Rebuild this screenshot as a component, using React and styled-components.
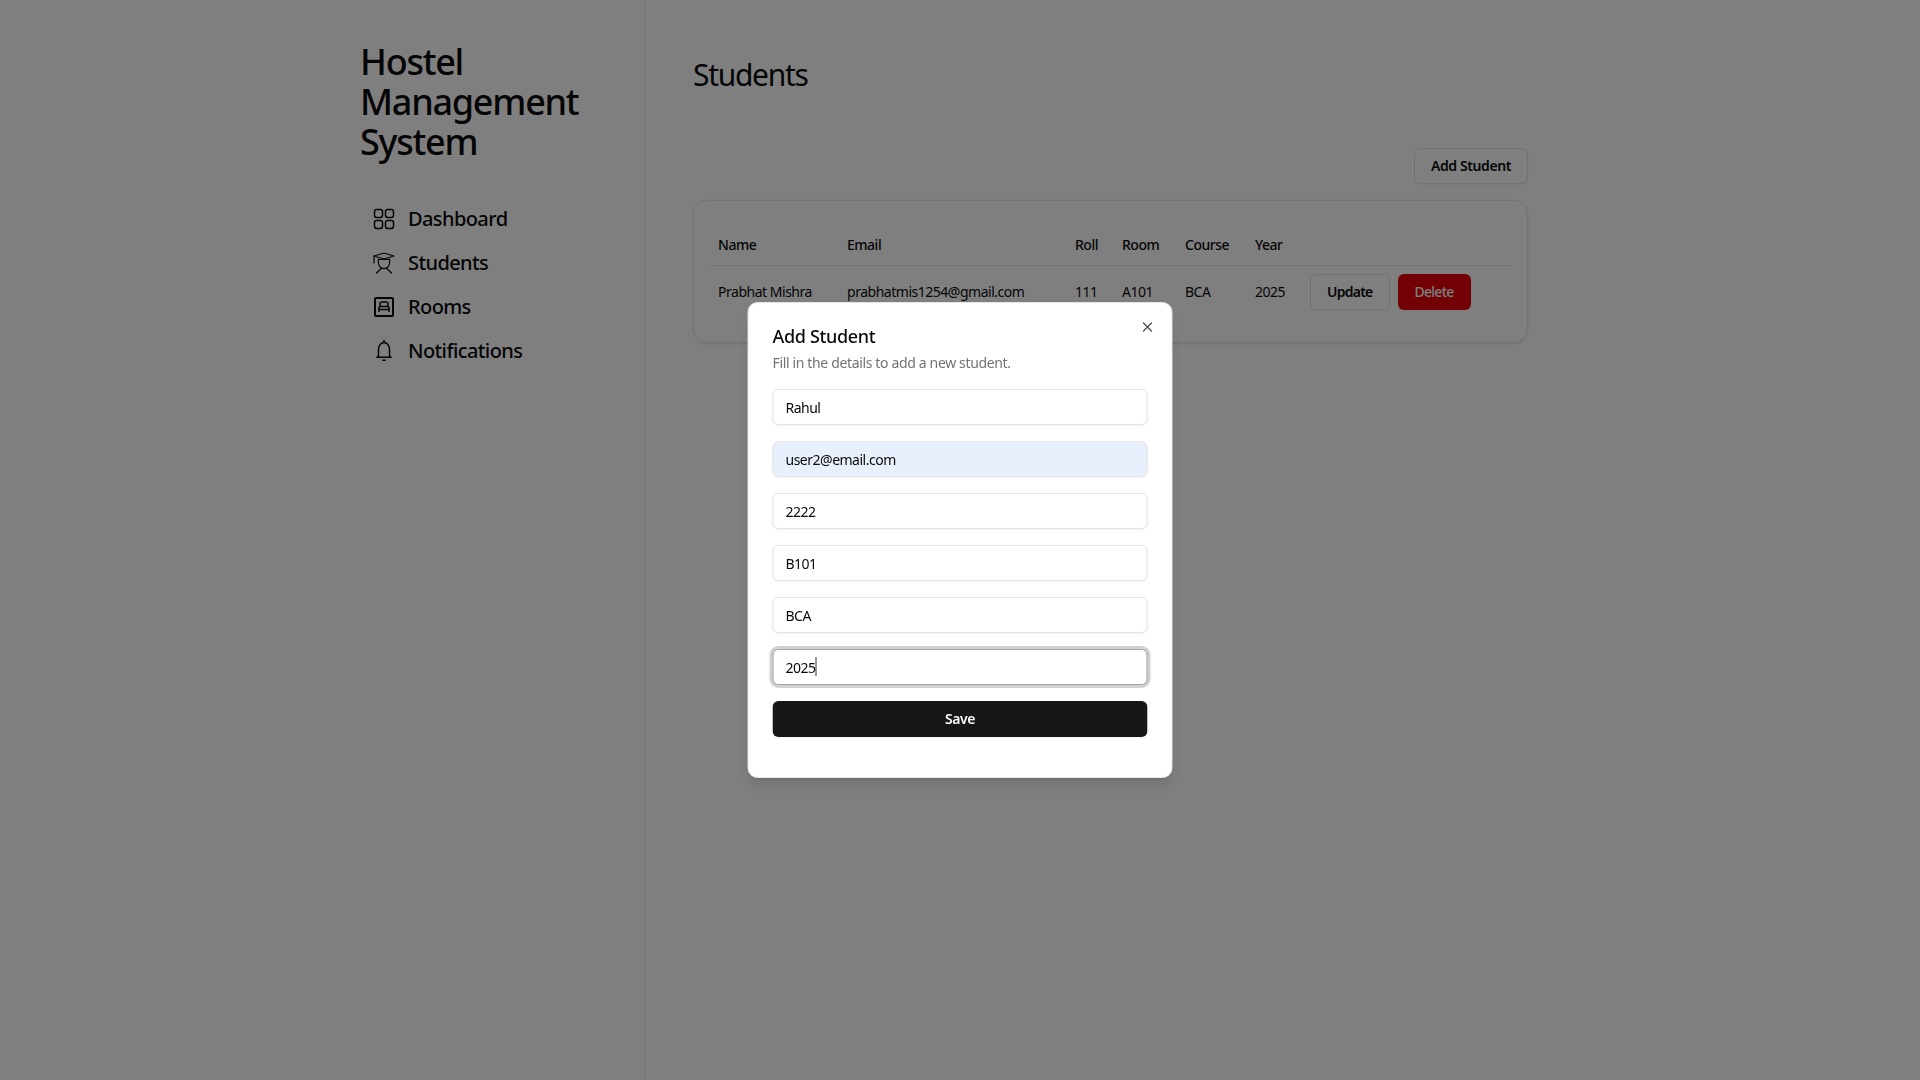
import React from 'react'
import styled, { createGlobalStyle } from 'styled-components'
import { X } from 'lucide-react'

const GlobalStyle = createGlobalStyle`
    * { box-sizing: border-box; }
    html, body { margin: 0; padding: 0; background: #fff; }
    body {
        font-family: "Noto Sans", "Open Sans", sans-serif;
        color: #0a0a0a;
    }
`

const Shell = styled.div`
    display: flex;
    width: 1248px;
    min-height: 100vh;
    margin: 0 auto;
`

const Sidebar = styled.aside`
    width: 309px;
    flex: none;
    padding: 42px 24px;
    border-right: 1px solid #e5e5e5;
`

const Brand = styled.h1`
    margin: 0 0 35px;
    font-size: 36px;
    line-height: 40px;
    font-weight: 500;
    letter-spacing: -1.25px;
`

const Nav = styled.nav`
    display: flex;
    flex-direction: column;
`

const NavItem = styled.a`
    display: flex;
    align-items: center;
    gap: 12px;
    padding: 8px 12px;
    font-size: 20px;
    line-height: 28px;
    font-weight: 500;
    letter-spacing: -0.6px;
`

const NavIcon = styled.svg.attrs({ viewBox: '0 0 24 24', fill: 'none', stroke: 'currentColor' })`
    width: 24px;
    height: 24px;
    flex: none;
    stroke-width: ${p => p.$weight || 1.5};
    stroke-linecap: round;
    stroke-linejoin: round;
`

const Main = styled.main`
    flex: 1;
    padding: 57px 56px 0 48px;
`

const PageTitle = styled.h2`
    margin: 0 0 55px;
    font-size: 30px;
    line-height: 36px;
    font-weight: 400;
    letter-spacing: -1.3px;
`

const Toolbar = styled.div`
    display: flex;
    justify-content: flex-end;
    margin-bottom: 16px;
`

const Button = styled.button`
    height: 36px;
    padding: 0 16px 2px;
    border: 1px solid ${p => (p.$variant === 'outline' ? '#e5e5e5' : 'transparent')};
    border-radius: 6px;
    background: ${p => (p.$variant === 'danger' ? '#e7000b' : p.$variant === 'primary' ? '#171717' : '#fff')};
    color: ${p => (p.$variant === 'outline' ? '#0a0a0a' : '#fafafa')};
    font-family: inherit;
    font-size: 14px;
    font-weight: ${p => (p.$variant === 'danger' ? 500 : 600)};
    letter-spacing: -0.4px;
    box-shadow: 0 1px 2px rgba(0, 0, 0, 0.05);
`

const Card = styled.section`
    height: 143px;
    padding: 24px 16px;
    border: 1px solid #e5e5e5;
    border-radius: 14px;
    box-shadow: 0 1px 3px rgba(0, 0, 0, 0.1);
`

const Table = styled.table`
    width: 100%;
    border-collapse: collapse;
    table-layout: fixed;
    font-size: 14px;
    letter-spacing: -0.48px;
`

const HeadCell = styled.th`
    height: 40px;
    padding: 0 8px;
    text-align: left;
    font-weight: 500;
    border-bottom: 1px solid #e5e5e5;
`

const Cell = styled.td`
    height: 52px;
    padding: 0 8px;
`

const Actions = styled.div`
    display: flex;
    gap: 8px;
    padding-top: 2px;

    ${Button} {
        letter-spacing: -0.75px;
    }
`

const Overlay = styled.div`
    position: fixed;
    inset: 0;
    background: rgba(0, 0, 0, 0.5);
`

const Modal = styled.div`
    position: fixed;
    top: 50%;
    left: 50%;
    transform: translate(-50%, -50%);
    display: flex;
    flex-direction: column;
    gap: 16px;
    width: 425px;
    height: 476px;
    padding: 24px;
    border: 1px solid #e5e5e5;
    border-radius: 10px;
    background: #fff;
    box-shadow: 0 10px 15px -3px rgba(0, 0, 0, 0.1), 0 4px 6px -4px rgba(0, 0, 0, 0.1);
`

const CloseButton = styled.span`
    position: absolute;
    top: 16px;
    right: 16px;
    display: flex;
    color: #0a0a0a;
    opacity: 0.7;
`

const ModalHeader = styled.div`
    display: flex;
    flex-direction: column;
    gap: 8px;
`

const ModalTitle = styled.h3`
    margin: 0;
    font-size: 18px;
    line-height: 18px;
    font-weight: 500;
    letter-spacing: -0.35px;
`

const ModalText = styled.p`
    margin: 0;
    font-size: 14px;
    line-height: 20px;
    color: #737373;
    letter-spacing: -0.35px;
`

const Form = styled.form`
    display: flex;
    flex-direction: column;
    gap: 16px;
`

const FieldWrap = styled.div`
    position: relative;
`

const Input = styled.input`
    display: block;
    width: 100%;
    height: 36px;
    padding: 4px 12px;
    border: 1px solid ${p => (p.$focused ? '#a1a1a1' : '#e5e5e5')};
    border-radius: 6px;
    outline: none;
    background: ${p => (p.$autofilled ? '#e8f0fe' : '#fff')};
    color: #0a0a0a;
    font-family: inherit;
    font-size: 14px;
    letter-spacing: -0.5px;
    box-shadow: ${p => (p.$focused ? '0 0 0 3px rgba(161, 161, 161, 0.5)' : '0 1px 2px rgba(0, 0, 0, 0.05)')};
`

const Caret = styled.span`
    position: absolute;
    top: 8px;
    left: 43px;
    width: 1px;
    height: 19px;
    background: #333;
`

const SaveButton = styled(Button)`
    width: 100%;
`

const DashboardIcon = () => (
    <NavIcon>
        <rect x="2.5" y="2.5" width="8" height="8" rx="2.2" />
        <rect x="13.5" y="2.5" width="8" height="8" rx="2.2" />
        <rect x="2.5" y="13.5" width="8" height="8" rx="2.2" />
        <rect x="13.5" y="13.5" width="8" height="8" rx="2.2" />
    </NavIcon>
)

const StudentIcon = () => (
    <NavIcon $weight={1.2}>
        <path d="M2 5 12 2l10 3-10 3z" />
        <path d="M2 5v7" />
        <path d="M6.4 8v4a5.6 5.6 0 0 0 11.2 0V8" />
        <path d="M6.4 8.5h11.2" />
        <path d="M9.6 17.2 4.5 22M14.4 17.2l5.1 4.8" />
    </NavIcon>
)

const RoomIcon = () => (
    <NavIcon>
        <rect x="3" y="3" width="18" height="18" rx="1" strokeWidth="2" />
        <path d="M8 11.500V8.700A1.700 1.700 0 0 1 9.700 7h4.600A1.700 1.700 0 0 1 16 8.700v2.800" />
        <path d="M7 16.500V13a1.500 1.500 0 0 1 1.500-1.500h7A1.500 1.500 0 0 1 17 13v3.500" />
        <path d="M7 14.500h10" />
    </NavIcon>
)

const BellIcon = () => (
    <NavIcon>
        <path d="M12 1.500v2" />
        <path d="M6.500 16V10a5.500 6.500 0 0 1 11 0v6c0 1 .6 1.600 1.500 2.300H5c.9-.7 1.500-1.300 1.500-2.300z" />
        <path d="M10.700 21.200h2.600" />
    </NavIcon>
)

const navItems = [
    { label: 'Dashboard', Icon: DashboardIcon },
    { label: 'Students', Icon: StudentIcon },
    { label: 'Rooms', Icon: RoomIcon },
    { label: 'Notifications', Icon: BellIcon },
]

const columns = [
    { label: 'Name', width: 129 },
    { label: 'Email', width: 228 },
    { label: 'Roll', width: 47 },
    { label: 'Room', width: 63 },
    { label: 'Course', width: 70 },
    { label: 'Year', width: 55 },
    { label: '' },
]

const fields = ['Rahul', 'user2@email.com', '2222', 'B101', 'BCA', '2025']

export default function App() {
    return (
        <>
            <GlobalStyle />
            <Shell>
                <Sidebar>
                    <Brand>Hostel Management System</Brand>
                    <Nav>
                        {navItems.map(({ label, Icon }) => (
                            <NavItem key={label}>
                                <Icon />
                                {label}
                            </NavItem>
                        ))}
                    </Nav>
                </Sidebar>
                <Main>
                    <PageTitle>Students</PageTitle>
                    <Toolbar>
                        <Button $variant="outline">Add Student</Button>
                    </Toolbar>
                    <Card>
                        <Table>
                            <colgroup>
                                {columns.map((c, i) => <col key={i} width={c.width} />)}
                            </colgroup>
                            <thead>
                                <tr>
                                    {columns.map((c, i) => <HeadCell key={i}>{c.label}</HeadCell>)}
                                </tr>
                            </thead>
                            <tbody>
                                <tr>
                                    <Cell>Prabhat Mishra</Cell>
                                    <Cell>prabhatmis1254@gmail.com</Cell>
                                    <Cell>111</Cell>
                                    <Cell>A101</Cell>
                                    <Cell>BCA</Cell>
                                    <Cell>2025</Cell>
                                    <Cell>
                                        <Actions>
                                            <Button $variant="outline">Update</Button>
                                            <Button $variant="danger">Delete</Button>
                                        </Actions>
                                    </Cell>
                                </tr>
                            </tbody>
                        </Table>
                    </Card>
                </Main>
            </Shell>
            <Overlay />
            <Modal>
                <CloseButton><X size={16} /></CloseButton>
                <ModalHeader>
                    <ModalTitle>Add Student</ModalTitle>
                    <ModalText>Fill in the details to add a new student.</ModalText>
                </ModalHeader>
                <Form>
                    {fields.map((value, i) => (
                        <FieldWrap key={value}>
                            <Input readOnly value={value} $autofilled={i === 1} $focused={i === 5} />
                            {i === 5 && <Caret />}
                        </FieldWrap>
                    ))}
                    <SaveButton type="button" $variant="primary">Save</SaveButton>
                </Form>
            </Modal>
        </>
    )
}
